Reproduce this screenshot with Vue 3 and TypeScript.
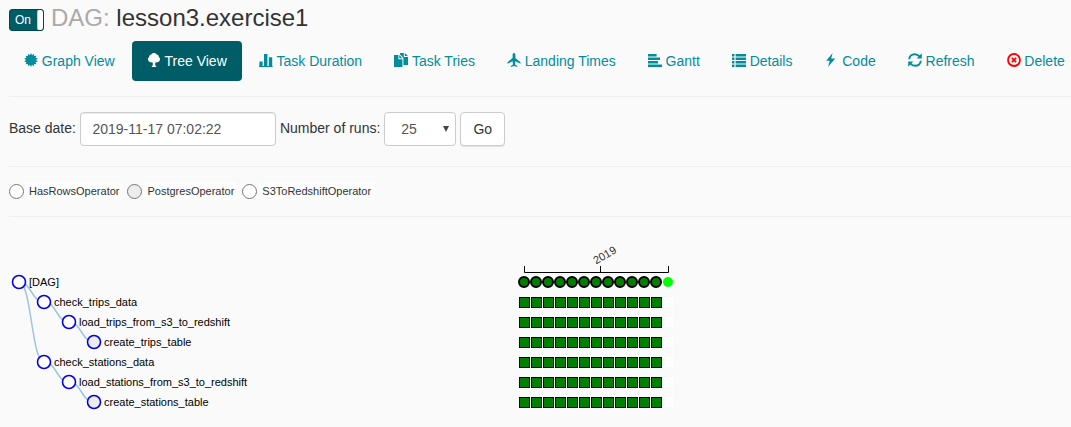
<script setup lang="ts">
interface NavItem { label: string; icon: string; active?: boolean }
interface TreeNode { name: string; x: number; y: number; fill: string }

const burst = Array.from({ length: 28 }, (_, i) => {
  const r = i % 2 ? 5 : 7
  const a = (i * Math.PI) / 14
  return `${(7 + r * Math.sin(a)).toFixed(2)},${(7 - r * Math.cos(a)).toFixed(2)}`
}).join(' ')

const nav: NavItem[] = [
  { label: 'Graph View', icon: 'burst' },
  { label: 'Tree View', icon: 'M7 0C8.3 0 9.2.6 9.6 1.4C11.2 1.6 12 2.8 11.8 4C13 4.7 13.3 6 12.8 7.2C12.3 8.6 11 9.4 9.6 9.3L8.2 9.8V12.4L9.2 13V14H4.8V13L5.8 12.4V9.8L4.4 9.3C3 9.4 1.7 8.6 1.2 7.2C.7 6 1 4.7 2.2 4C2 2.8 2.8 1.6 4.4 1.4C4.8.6 5.7 0 7 0Z', active: true },
  { label: 'Task Duration', icon: 'M.4 8.4H3.6V14H.4ZM5 1H8.4V14H5ZM9.8 4.2H13.2V14H9.8ZM0 13H13.6V14H0Z' },
  { label: 'Task Tries', icon: 'M0 2H4.4V6.2H8.4V14H0ZM5.3 2L8.4 5.2H5.3ZM6 0H9.8V4H14V12H9.4V4.8L6 1.4ZM10.8 0L14 3.1H10.8Z' },
  { label: 'Landing Times', icon: 'M7 0C7.8 0 8.4.9 8.4 2V5.1L13.5 9.2V10.7L8.4 8.2L8 11.4L10.2 13V14L7 13L3.8 14V13L6 11.4L5.6 8.2L.5 10.7V9.2L5.6 5.1V2C5.6.9 6.2 0 7 0Z' },
  { label: 'Gantt', icon: 'M0 1H8.6V3.6H0ZM0 4.5H12V7H0ZM0 7.9H10V10.4H0ZM0 11.4H14V14H0Z' },
  { label: 'Details', icon: 'M0 1H2.4V3.4H0ZM3.6 1H14V3.4H3.6ZM0 4.5H2.4V6.9H0ZM3.6 4.5H14V6.9H3.6ZM0 8H2.4V10.4H0ZM3.6 8H14V10.4H3.6ZM0 11.5H2.4V13.9H0ZM3.6 11.5H14V13.9H3.6Z' },
  { label: 'Code', icon: 'M8.6 0L2.2 7.8H5.8L4 14L11.2 5.6H7.2Z' },
  { label: 'Refresh', icon: 'refresh' },
  { label: 'Delete', icon: 'delete' },
]

const operators = [
  { name: 'HasRowsOperator', fill: '#fff' },
  { name: 'PostgresOperator', fill: '#ededed' },
  { name: 'S3ToRedshiftOperator', fill: '#fff' },
]

const nodes: TreeNode[] = [
  { name: '[DAG]', x: 19, y: 65, fill: '#fff' },
  { name: 'check_trips_data', x: 44, y: 85, fill: '#fff' },
  { name: 'load_trips_from_s3_to_redshift', x: 69, y: 105, fill: '#fff' },
  { name: 'create_trips_table', x: 94, y: 125, fill: '#ededed' },
  { name: 'check_stations_data', x: 44, y: 145, fill: '#fff' },
  { name: 'load_stations_from_s3_to_redshift', x: 69, y: 165, fill: '#fff' },
  { name: 'create_stations_table', x: 94, y: 185, fill: '#ededed' },
]
const edges = [[0, 1], [1, 2], [2, 3], [0, 4], [4, 5], [5, 6]]
const links = edges.map(([a, b]) => {
  const s = nodes[a], t = nodes[b]
  const m = (s.x + t.x) / 2
  return `M${s.x},${s.y}C${m},${s.y} ${m},${t.y} ${t.x},${t.y}`
})
const runs = Array.from({ length: 12 }, (_, i) => i * 12)
</script>

<template>
  <main class="page">
    <header class="title">
      <span class="toggle"><span class="on">On</span><span class="handle"></span></span>
      <h3><span class="muted">DAG:</span> lesson3.exercise1</h3>
    </header>
    <nav class="pills">
      <a v-for="n in nav" :key="n.label" :class="{ active: n.active }">
        <svg class="icon" viewBox="0 0 14 14">
          <polygon v-if="n.icon === 'burst'" :points="burst" />
          <g v-else-if="n.icon === 'refresh'">
            <path class="line" d="M1.2 6.2C1.4 3.2 3.8 1.2 6.8 1.2C8.8 1.2 10.4 2 11.6 3.5M12.8 7.8C12.6 10.8 10.2 12.8 7.2 12.8C5.2 12.8 3.6 12 2.4 10.5" />
            <path d="M13.8 .2V5.6H8.6ZM.2 13.8V8.4H5.4Z" />
          </g>
          <g v-else-if="n.icon === 'delete'" class="danger">
            <circle cx="7" cy="7" r="6" />
            <path d="M4.9 4.9L9.1 9.1M9.1 4.9L4.9 9.1" />
          </g>
          <path v-else :d="n.icon" />
        </svg>
        <span>{{ n.label }}</span>
      </a>
    </nav>
    <hr />
    <form class="filters" @submit.prevent>
      <label>Base date:</label>
      <span class="control date">2019-11-17 07:02:22</span>
      <label>Number of runs:</label>
      <span class="control select">25<svg viewBox="0 0 6 6"><path d="M0 0H6L3 6Z" /></svg></span>
      <button class="control go">Go</button>
    </form>
    <hr />
    <div class="legend">
      <template v-for="o in operators" :key="o.name">
        <svg class="dot" viewBox="0 0 16 16"><circle cx="7.5" cy="7.5" r="7" :fill="o.fill" /></svg>
        <span class="op">{{ o.name }}</span>
      </template>
    </div>
    <hr />
    <svg class="tree" width="1071" height="210" viewBox="0 0 1071 210">
      <path v-for="l in links" :key="l" class="link" :d="l" />
      <g v-for="n in nodes" :key="n.name">
        <circle class="node" :cx="n.x" :cy="n.y" r="6.5" :fill="n.fill" />
        <text :x="n.x + 10" :y="n.y + 4">{{ n.name }}</text>
      </g>
      <path class="axis" d="M524.5 49V55.5H668.5V49M600.5 49V55" />
      <text class="year" transform="translate(596 47.5) rotate(-30)">2019</text>
      <circle v-for="r in runs" :key="r" class="run" :cx="524 + r" cy="65" r="5" />
      <circle class="running" cx="668" cy="65" r="5" />
      <g v-for="n in nodes.slice(1)" :key="n.name">
        <rect v-for="r in runs" :key="r" class="task" :x="519.5 + r" :y="n.y - 4.5" width="10" height="10" />
        <rect class="empty" x="663" :y="n.y - 5" width="10" height="10" />
      </g>
    </svg>
  </main>
</template>

<style>
body { background: #fafafa; overflow: hidden; }
</style>
<style scoped>
* { box-sizing: border-box; }
.page { width: 1071px; height: 427px; overflow: hidden; font: 14px/20px "Liberation Sans", Arial, sans-serif; color: #333; background: #fafafa; }
.title { display: flex; height: 41px; padding-left: 9px; }
.toggle { display: flex; justify-content: space-between; width: 35px; height: 22px; margin-top: 9px; border: 1px solid #00474d; border-radius: 3px; overflow: hidden; background: #005c66; color: #fff; font-size: 12px; line-height: 20px; }
.on { padding-left: 5px; }
.handle { width: 6px; background: #fff; border-left: 1px solid #ccc; border-radius: 2px; }
h3 { margin: 5px 0 0 7px; font-size: 24px; line-height: 26px; font-weight: 400; white-space: nowrap; }
.muted { color: #aaa; }
.pills { display: flex; gap: 2px; width: max-content; margin-left: 9px; }
.pills a { display: flex; gap: 3.8px; height: 40px; padding: 10px 15px; border-radius: 4px; color: #018d9c; white-space: nowrap; }
.pills a.active { background: #005c66; color: #fff; }
.icon { flex: none; width: 14px; height: 14px; margin-top: 2px; fill: currentColor; }
.line { fill: none; stroke: currentColor; stroke-width: 2; }
.danger { fill: none; stroke: red; stroke-width: 1.8; }
hr { height: 1px; margin: 15px 0 15px 9px; border: 0; background: #eee; }
.filters { display: flex; align-items: flex-start; gap: 4px; height: 39px; padding-left: 9px; margin: 0; }
.filters label { padding-top: 6px; white-space: nowrap; }
.control { height: 34px; border: 1px solid #ccc; border-radius: 4px; background: #fff; padding: 6px 12px; color: #555; line-height: 20px; white-space: nowrap; }
.date { width: 196px; padding-left: 11.5px; box-shadow: inset 0 1px 1px rgba(0, 0, 0, .075); }
.select { display: flex; justify-content: space-between; width: 72px; padding: 6px 6px 6px 16px; }
.select svg { width: 6px; height: 6px; margin-top: 7px; fill: #444; }
.go { width: 45px; padding: 6px 0; color: #333; font: inherit; box-shadow: 0 1px 1px rgba(0, 0, 0, .1); }
.legend { display: flex; height: 19px; padding-left: 9px; }
.dot { width: 16px; height: 16px; margin-top: 2px; stroke: #777; }
.op { height: 18px; margin-right: 4px; padding: 0 4px; border-radius: 4px; background: #fdfdfd; font-size: 11px; line-height: 18px; white-space: nowrap; }
.tree { display: block; margin-top: -15px; font-size: 11px; fill: #000; }
.link { fill: none; stroke: #9ec5e0; stroke-width: 1.5; }
.node { stroke: #0000ee; stroke-width: 1.6; }
.axis { fill: none; stroke: #000; }
.year { fill: #333; }
.run { fill: green; stroke: #000; stroke-width: 2; }
.running { fill: lime; }
.task { fill: green; stroke: #000; }
.empty { fill: #fff; }
</style>
